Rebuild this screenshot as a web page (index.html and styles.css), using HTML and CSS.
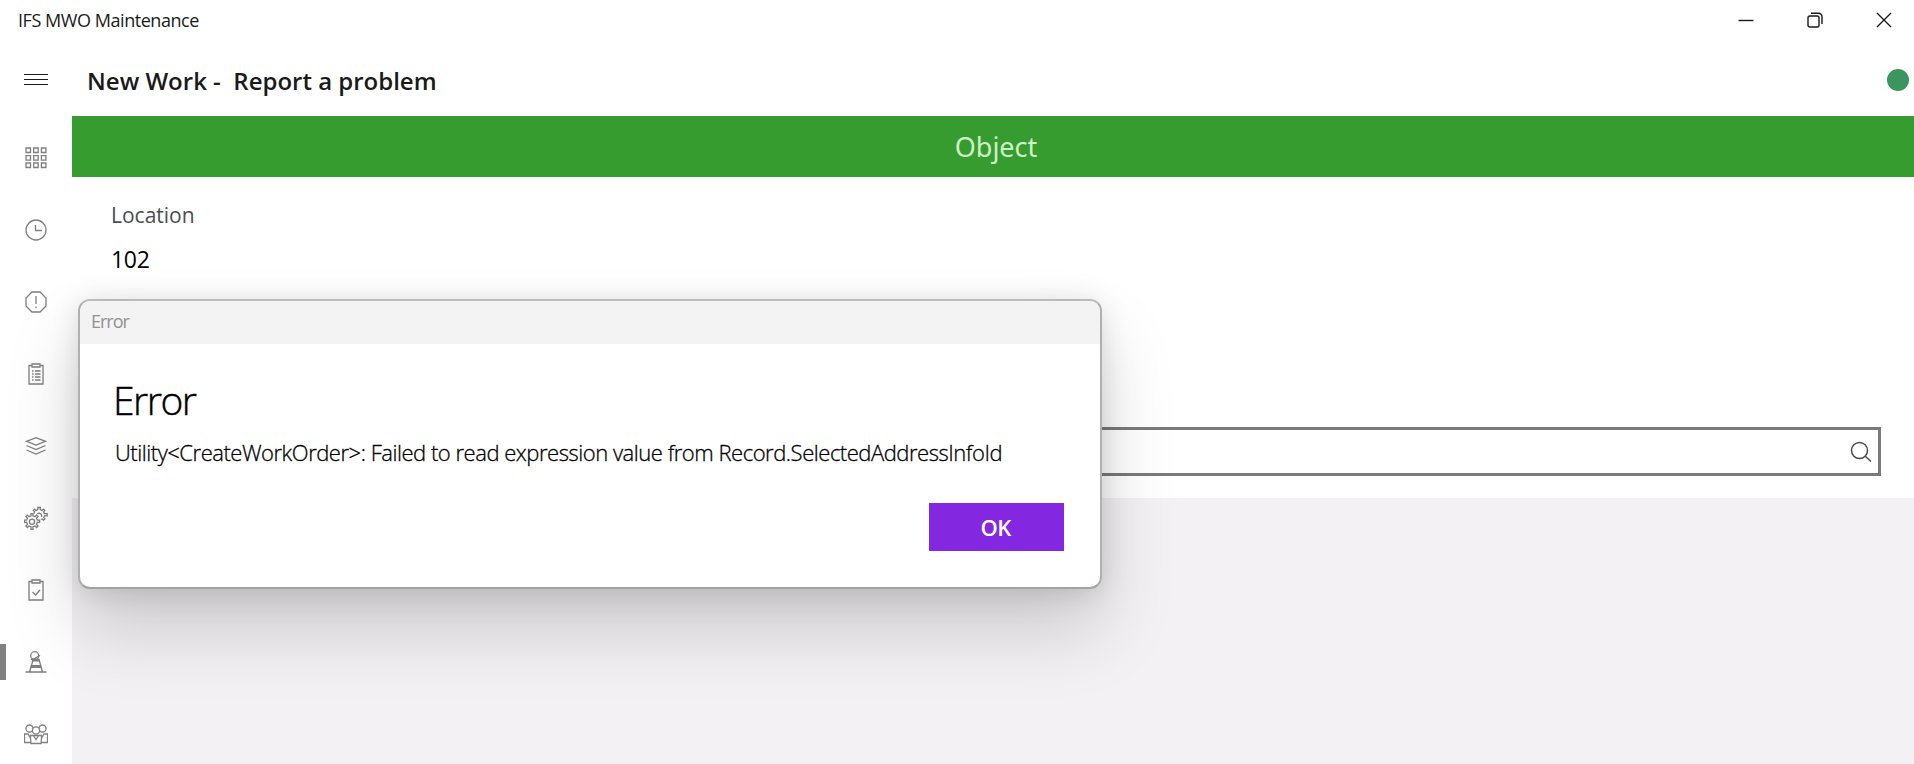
FILE: index.html
```html
<!DOCTYPE html>
<html lang="en">
  <head>
    <meta charset="utf-8">
    <title>IFS MWO Maintenance</title>
    <link rel="stylesheet" href="styles.css">
  </head>
<body>

  <header class="titlebar">
    <span class="app-name">IFS MWO Maintenance</span>
    <div class="window-buttons">
      <svg class="wbtn" viewBox="0 0 16 16"><path d="M.5 8.500h15"/></svg>
      <svg class="wbtn" viewBox="0 0 16 16"><rect x="1" y="4" width="11" height="11" rx="1.8"/><path d="M4 1.200h7.500a3.500 3.500 0 0 1 3.500 3.500V12"/></svg>
      <svg class="wbtn" viewBox="0 0 16 16"><path d="M1 1l14 14M15 1L1 15"/></svg>
    </div>
  </header>

  <div class="shell">
    <nav class="sidebar">
      <a class="menu"><svg class="icon" viewBox="0 0 24 24"><path d="M0 6.500h24M0 11.500h24M0 16.500h24"/></svg></a>
      <a class="item"><svg class="icon" viewBox="0 0 24 24"><path d="M2 2h4.500v4.500H2zM9.700 2h4.500v4.500H9.700zM17.400 2h4.500v4.500h-4.500zM2 9.600h4.500v4.500H2zM9.700 9.600h4.500v4.500H9.700zM17.400 9.600h4.500v4.500h-4.500zM2 17h4.500v4.500H2zM9.700 17h4.500v4.500H9.700zM17.400 17h4.500v4.500h-4.500z"/></svg></a>
      <a class="item"><svg class="icon" viewBox="0 0 24 24"><circle cx="12" cy="12" r="10"/><path d="M11.500 7v5.500H18"/></svg></a>
      <a class="item"><svg class="icon" viewBox="0 0 24 24"><path d="M8 2h8l6 6v8l-6 6H8l-6-6V8zM12 6v8M12 16.500v1.500"/></svg></a>
      <a class="item"><svg class="icon" viewBox="0 0 24 24"><path d="M8 3.500H5v18.500h14V3.500h-3M8 2h8v3H8zM8 9h1.500M11 9h5.500M8 12h1.500M11 12h5.500M8 15h1.500M11 15h5.500M8 18h1.500M11 18h5.500"/></svg></a>
      <a class="item"><svg class="icon" viewBox="0 0 24 24"><path d="M2.500 7.300L12 3.700l9.500 3.600L12 11zM2.500 11.500L12 15.500l9.500-4M2.500 16L12 20l9.500-4"/></svg></a>
      <a class="item"><svg class="icon" viewBox="0 0 24 24">
        <circle cx="8" cy="15.700" r="2.600"/><path d="M7 7.700h2v2.200l2 .8 1.600-1.600 1.500 1.500-1.600 1.600.8 2h2.300v2.200h-2.300l-.8 2 1.600 1.600-1.500 1.500-1.600-1.600-2 .8v2.600H7v-2.600l-2-.8-1.600 1.600L1.900 20l1.600-1.600-.8-2H.5v-2.200h2.200l.8-2-1.600-1.600 1.500-1.500L5 10.700l2-.8z"/>
        <path d="M10 7.500l.6-1.600-1.300-1.300 1.400-1.400L12 4.500l1.800-.8V1.500h2.500v2.200l1.700.8 1.400-1.300 1.400 1.400-1.300 1.300.8 1.700h2.900v2.200h-2.700l-.8 1.800 1.200 1.300-1.400 1.300-1.400-1.200-1 .5M13.200 7.800c2.600-1.500 5 .4 4.300 3"/></svg></a>
      <a class="item"><svg class="icon" viewBox="0 0 24 24"><path d="M8 3.500H5v18.500h14V3.500h-3M8 2h8v3H8zM8.500 14l3 3 4.500-5"/></svg></a>
      <a class="item selected"><svg class="icon" viewBox="0 0 24 24"><path d="M1.500 22h21M5.500 22l3.700-12.500M18.500 22L15 9.500"/><circle cx="10.700" cy="5.700" r="4"/><path d="M7 9.300c4 0 6-2 9-4M7.500 9.300h8"/><path class="fill" d="M8.300 8.800h6.700l.7 2.700H7.600zM7 15h10l.7 3H6.300z"/></svg></a>
      <a class="item people"><svg class="icon" viewBox="0 0 24 24"><circle cx="5.500" cy="5.500" r="3.500"/><circle cx="18.500" cy="5.500" r="3.500"/><circle class="front" cx="12" cy="7.500" r="3.600"/><path d="M6.500 12.500h11v3L17 20.500H7l-.5-5zM9.300 12.500L12 16.500l2.700-4M4.500 11H.5v8.500h6M19.500 11h4v8.500h-6M4 11l2 3.500M20 11l-2 3.500"/></svg></a>
    </nav>

    <main class="page">
      <div class="page-head">
        <h1 class="page-title">New Work -  Report a problem</h1>
        <span class="status"></span>
      </div>
      <div class="band"><span class="band-text">Object</span></div>
      <section class="form">
        <label class="label">Location</label>
        <div class="value">102</div>
        <div class="search">
          <svg class="search-icon" viewBox="0 0 22 22"><circle cx="9.500" cy="9.500" r="8"/><path d="M15 15l6 5.500"/></svg>
        </div>
      </section>
    </main>
  </div>

  <div class="dialog">
    <div class="dialog-bar"><span class="dialog-caption">Error</span></div>
    <div class="dialog-body">
      <h2 class="dialog-title">Error</h2>
      <p class="message">Utility&lt;CreateWorkOrder&gt;: Failed to read expression value from Record.SelectedAddressInfoId</p>
      <div class="actions"><button class="ok">OK</button></div>
    </div>
  </div>

</body>
</html>
```
FILE: styles.css
```css
* { box-sizing: border-box; }

body {
  margin: 0;
  height: 764px;
  overflow: hidden;
  display: flex;
  flex-direction: column;
  font-family: "Open Sans", "Noto Sans", sans-serif;
  color: #1a1a1a;
  background: #fff;
}

h1, h2, p { margin: 0; }
svg { display: block; fill: none; }

.titlebar {
  flex: none;
  height: 40px;
  padding: 0 22px 0 18px;
  display: flex;
  align-items: center;
  justify-content: space-between;
}
.app-name { font-size: 18px; letter-spacing: -0.45px; }
.window-buttons { display: flex; gap: 53px; }
.wbtn { width: 16px; height: 16px; stroke: #1a1a1a; stroke-width: 1.4; }

.shell { flex: 1; min-height: 0; display: flex; }

.sidebar { flex: none; width: 72px; }
.menu, .item {
  height: 72px;
  display: flex;
  align-items: center;
  justify-content: center;
}
.menu { height: 82px; padding-bottom: 3px; }
.people { padding-top: 2px; }
.icon { width: 24px; height: 24px; stroke: #7f7f7f; stroke-width: 1.3; }
.menu .icon { stroke: #1a1a1a; stroke-width: 1; }
.icon .fill { fill: #7f7f7f; stroke: none; }
.icon .front { fill: #fff; }
.selected {
  background: linear-gradient(#808080, #808080) left center / 6px 36px no-repeat;
}

.page {
  flex: 1;
  display: flex;
  flex-direction: column;
  background: #f3f1f4;
}
.page-head {
  height: 76px;
  padding: 0 5px 0 15px;
  display: flex;
  justify-content: space-between;
  background: #fff;
}
.page-title {
  font-size: 24px;
  font-weight: 600;
  line-height: 81px;
  white-space: pre;
}
.status {
  width: 22px;
  height: 22px;
  margin-top: 29px;
  border-radius: 50%;
  background: #3a965d;
}

.band {
  height: 61px;
  padding-left: 6px;
  display: flex;
  align-items: center;
  justify-content: center;
  background: #379c2f;
  color: #cdf0c6;
  font-family: "Noto Sans", sans-serif;
  font-size: 27px;
}

.form {
  height: 321px;
  padding: 21px 33px 22px 39px;
  display: flex;
  flex-direction: column;
  align-items: flex-start;
  background: #fff;
}
.label { font-size: 21px; line-height: 34px; color: #4a4d52; }
.value { margin-top: 10px; font-size: 23px; line-height: 34px; letter-spacing: -0.3px; color: #000; }
.search {
  align-self: stretch;
  height: 49px;
  margin-top: auto;
  padding-right: 6px;
  border: 3px solid #7a7a7a;
  display: flex;
  align-items: center;
  justify-content: flex-end;
}
.search-icon { width: 22px; height: 22px; stroke: #4a4a4a; stroke-width: 1.5; }

.dialog {
  position: absolute;
  left: 78px;
  top: 299px;
  width: 1024px;
  height: 290px;
  border: 2px solid #b0b0b0;
  border-top-color: #bababa;
  border-bottom-color: #a3a3a3;
  border-radius: 12px;
  overflow: hidden;
  background: #fff;
  box-shadow: 0 40px 72px rgba(0, 0, 0, .17), 0 3px 28px rgba(0, 0, 0, .12);
}
.dialog-bar {
  height: 43px;
  padding-left: 11px;
  background: #f3f3f3;
  line-height: 41px;
  color: #919191;
  font-size: 18px;
  letter-spacing: -1px;
}
.dialog-body { padding: 29px 36px 0 34px; color: #000; }
.dialog-title {
  margin-left: -1px;
  font-size: 39px;
  font-weight: 300;
  line-height: 54px;
  letter-spacing: -1.5px;
  -webkit-text-stroke: .4px #000;
}
.message {
  margin-top: 10px;
  padding-left: 1px;
  font-size: 22px;
  font-weight: 300;
  line-height: 31px;
  letter-spacing: -0.47px;
  white-space: nowrap;
  -webkit-text-stroke: .3px #000;
}
.actions { display: flex; justify-content: flex-end; margin-top: 35px; }
.ok {
  width: 135px;
  height: 48px;
  padding-right: 8px;
  border: 0;
  background: #8427e0;
  color: #fff;
  font: 600 22px "Open Sans", sans-serif;
  letter-spacing: -0.8px;
}
```
